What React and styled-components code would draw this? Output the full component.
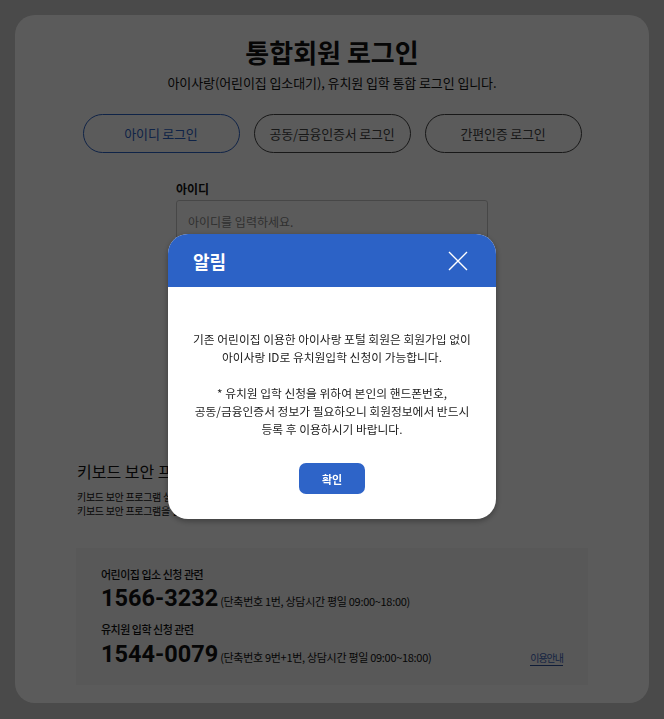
import React from "react"
import styled, { createGlobalStyle } from "styled-components"

const GlobalStyle = createGlobalStyle`
  html, body {
    margin: 0;
    padding: 0;
    background: #cfcfcf;
    font-family: "Noto Sans CJK KR", "Noto Sans", sans-serif;
    color: #111;
  }
  * { box-sizing: border-box; }
`

const Page = styled.div`
  padding: 15px;
`

const Panel = styled.div`
  background: #fff;
  border-radius: 20px;
  padding: 19px 61px 18px;
  display: flex;
  flex-direction: column;
`

const Title = styled.h1`
  margin: 0;
  font-size: 26px;
  line-height: 36px;
  font-weight: 700;
  text-align: center;
  letter-spacing: 0;
`

const SubTitle = styled.p`
  margin: 3px 0 0;
  font-size: 13px;
  line-height: 20px;
  text-align: center;
  letter-spacing: -0.1px;
`

const Tabs = styled.div`
  display: flex;
  justify-content: center;
  gap: 14px;
  margin-top: 21px;
`

const Tab = styled.button`
  width: 157px;
  height: 39px;
  border-radius: 20px;
  background: #fff;
  border: 1px solid ${p => (p.active ? "#2c62c6" : "#444")};
  color: ${p => (p.active ? "#2c62c6" : "#444")};
  font-family: inherit;
  font-size: 13px;
  letter-spacing: -0.2px;
`

const Form = styled.div`
  width: 312px;
  margin: 28px auto 0;
  display: flex;
  flex-direction: column;
`

const Label = styled.label`
  font-size: 12px;
  line-height: 16px;
  font-weight: 700;
  margin-top: ${p => p.gap || 0}px;
`

const Input = styled.div`
  margin-top: 3px;
  height: 42px;
  border: 1px solid #c8c8c8;
  border-radius: 3px;
  padding: 0 11px;
  display: flex;
  align-items: center;
  font-size: 12px;
  color: #888;
`

const LoginButton = styled.div`
  margin-top: 20px;
  height: 48px;
  border-radius: 4px;
  background: #2c62c6;
  color: #fff;
  display: flex;
  align-items: center;
  justify-content: center;
  font-weight: 700;
  font-size: 14px;
`

const Section = styled.div`
  margin-top: 75px;
`

const SectionTitle = styled.h3`
  margin: 0;
  font-size: 16px;
  line-height: 22px;
  font-weight: 400;
  padding-left: 1px;
`

const SmallText = styled.p`
  margin: 8px 0 0;
  font-size: 10px;
  line-height: 14px;
  padding-left: 1px;
  letter-spacing: -0.3px;
`

const InfoBox = styled.div`
  margin-top: 30px;
  background: #f6f6f6;
  padding: 18px 25px 16px;
`

const InfoLabel = styled.div`
  font-size: 11px;
  line-height: 16px;
  font-weight: 500;
  letter-spacing: -0.5px;
  margin-top: ${p => p.gap || 0}px;
`

const PhoneRow = styled.div`
  display: flex;
  align-items: baseline;
  margin-top: ${p => p.gap || 0}px;
`

const Phone = styled.span`
  font-family: Roboto, "Noto Sans", sans-serif;
  font-size: 23.5px;
  line-height: 30px;
  font-weight: 700;
`

const PhoneNote = styled.span`
  font-size: 11px;
  margin-left: 2px;
  letter-spacing: -0.3px;
`

const GuideLink = styled.a`
  margin-left: auto;
  font-size: 10px;
  color: #3b63b8;
  text-decoration: none;
  border-bottom: 1px solid #2c4f9a;
  line-height: 14px;
  letter-spacing: -1px;
`

const Overlay = styled.div`
  position: fixed;
  inset: 0;
  background: rgba(0, 0, 0, 0.643);
  display: flex;
  justify-content: center;
  align-items: flex-start;
  padding-top: 234px;
`

const Modal = styled.div`
  width: 328px;
  background: #fff;
  border-radius: 20px;
  overflow: hidden;
  box-shadow: 0 2px 6px rgba(0, 0, 0, 0.35);
`

const ModalHeader = styled.div`
  height: 53px;
  background: #2c62c6;
  display: flex;
  align-items: center;
  justify-content: space-between;
  padding: 0 28px 0 25px;
`

const ModalTitle = styled.h2`
  margin: 0;
  color: #fff;
  font-size: 18px;
  font-weight: 700;
`

const CloseButton = styled.button`
  border: 0;
  background: none;
  padding: 0;
  width: 20px;
  height: 20px;
  display: flex;
`

const ModalBody = styled.div`
  padding: 43px 10px 25px;
  display: flex;
  flex-direction: column;
  align-items: center;
`

const Message = styled.p`
  margin: 0;
  font-size: 11.75px;
  line-height: 18px;
  color: #222;
  text-align: center;
`

const ConfirmButton = styled.button`
  margin-top: 25px;
  width: 66px;
  height: 31px;
  border: 0;
  border-radius: 7px;
  background: #2e64c8;
  color: #fff;
  font-family: inherit;
  font-size: 11px;
  font-weight: 700;
`

export default function App() {
  return (
    <>
      <GlobalStyle />
      <Page>
        <Panel>
          <Title>통합회원 로그인</Title>
          <SubTitle>아이사랑(어린이집 입소대기), 유치원 입학 통합 로그인 입니다.</SubTitle>
          <Tabs>
            <Tab active>아이디 로그인</Tab>
            <Tab>공동/금융인증서 로그인</Tab>
            <Tab>간편인증 로그인</Tab>
          </Tabs>
          <Form>
            <Label>아이디</Label>
            <Input>아이디를 입력하세요.</Input>
            <Label gap={14}>비밀번호</Label>
            <Input>비밀번호를 입력하세요.</Input>
            <LoginButton>로그인</LoginButton>
          </Form>
          <Section>
            <SectionTitle>키보드 보안 프로그램</SectionTitle>
            <SmallText>
              키보드 보안 프로그램 설치 후 로그인 하시기 바랍니다.
              <br />
              키보드 보안 프로그램을 설치하지 않으면 키보드 해킹으로 인해 개인정보가 유출될 수 있습니다.
            </SmallText>
          </Section>
          <InfoBox>
            <InfoLabel>어린이집 입소 신청 관련</InfoLabel>
            <PhoneRow gap={1}>
              <Phone>1566-3232</Phone>
              <PhoneNote>(단축번호 1번, 상담시간 평일 09:00~18:00)</PhoneNote>
            </PhoneRow>
            <InfoLabel gap={8}>유치원 입학 신청 관련</InfoLabel>
            <PhoneRow gap={2}>
              <Phone>1544-0079</Phone>
              <PhoneNote>(단축번호 9번+1번, 상담시간 평일 09:00~18:00)</PhoneNote>
              <GuideLink href="#">이용안내</GuideLink>
            </PhoneRow>
          </InfoBox>
        </Panel>
      </Page>
      <Overlay>
        <Modal>
          <ModalHeader>
            <ModalTitle>알림</ModalTitle>
            <CloseButton aria-label="닫기">
              <svg width="20" height="20" viewBox="0 0 20 20">
                <path d="M1 1L19 19M19 1L1 19" stroke="#fff" strokeWidth="1.4" />
              </svg>
            </CloseButton>
          </ModalHeader>
          <ModalBody>
            <Message>
              기존 어린이집 이용한 아이사랑 포털 회원은 회원가입 없이
              <br />
              아이사랑 ID로 유치원입학 신청이 가능합니다.
              <br />
              <br />
              * 유치원 입학 신청을 위하여 본인의 핸드폰번호,
              <br />
              공동/금융인증서 정보가 필요하오니 회원정보에서 반드시
              <br />
              등록 후 이용하시기 바랍니다.
            </Message>
            <ConfirmButton>확인</ConfirmButton>
          </ModalBody>
        </Modal>
      </Overlay>
    </>
  )
}
